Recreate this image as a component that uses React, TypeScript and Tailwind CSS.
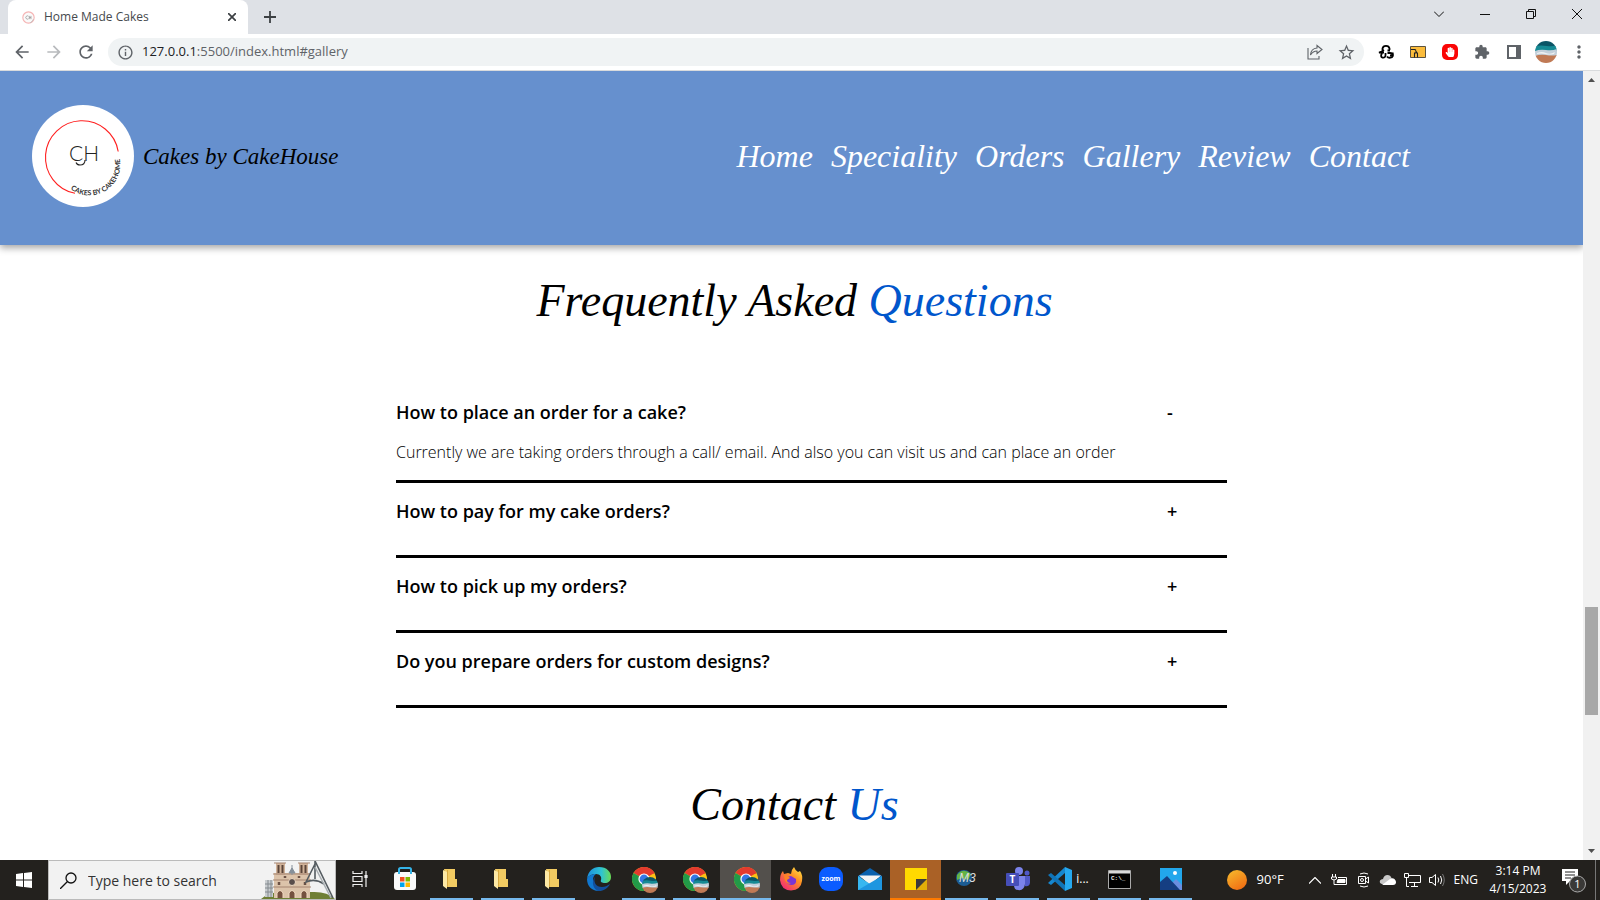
import { useState, type ReactNode } from "react";
import { FaHandPaper } from "react-icons/fa";
import { MdArrowBack, MdArrowForward, MdRefresh, MdInfoOutline, MdStarBorder, MdExtension, MdMoreVert } from "react-icons/md";

const script = "font-['Liberation_Serif',serif] italic";

function BrandMark() {
  return (
    <svg viewBox="0 0 102 102" className="size-[102px] shrink-0" role="img" aria-label="CakeHouse logo">
      <circle cx="51" cy="51" r="51" fill="#fff" />
      <path d="M86.2 46.5A36.6 36.6 0 1 0 43 88.3" fill="none" stroke="#ff2020" strokeWidth="1.1" />
      <text x="37" y="56" fontFamily="Lato, sans-serif" fontWeight="300" fontSize="21" fill="#222">CH</text>
      <path d="M53 55q0 5-5 5-3 0-4-2.500" fill="none" stroke="#222" strokeWidth="1.100" />
      <path id="ring" d="M38.500 84A31 31 0 0 0 83 42" fill="none" />
      <text fontFamily="Lato, sans-serif" fontWeight="700" fontSize="7" fill="#333">
        <textPath href="#ring">CAKES BY CAKEHOME</textPath>
      </text>
    </svg>
  );
}

function Avatar({ className }: { className: string }) {
  return (
    <svg viewBox="0 0 22 22" className={className} aria-hidden="true">
      <defs>
        <clipPath id="disc"><circle cx="11" cy="11" r="11" /></clipPath>
      </defs>
      <g clipPath="url(#disc)">
        <path fill="#0b5566" d="M0 0h22v6H0z" />
        <path fill="#168a94" d="M0 5q6-1 12 0t10-1v6H0z" />
        <path fill="#c3d0da" d="M0 10q5-2 11-1t11-1v7H0z" />
        <path fill="#eef1f3" d="M2 12q5-2 9 0t9-1l-1 2q-5 1-9 0t-8 0z" />
        <path fill="#c07a55" d="M0 15q5-2 11-1t11 0v8H0z" />
      </g>
    </svg>
  );
}

function TabStrip() {
  return (
    <div className="flex h-[34px] shrink-0 items-stretch bg-[#dee1e6]">
      <div className="ml-2 flex w-60 items-center rounded-t-lg bg-white px-3 text-[#45494d]">
        <svg viewBox="0 0 16 16" className="ml-[2px] size-[13px]" aria-hidden="true">
          <circle cx="8" cy="8" r="7" fill="#fafafa" stroke="#f5b5b5" strokeWidth="1.400" />
          <path d="M14 10a6.500 6.500 0 0 1-4 4.500" stroke="#bbb" fill="none" />
          <path d="M8 6.500a2 2 0 1 0 0 3M9 6v4M11 6v4M9 8h2" stroke="#999" fill="none" />
        </svg>
        <span className="ml-[9px] flex-1 text-[12px]">Home Made Cakes</span>
        <button aria-label="Close tab">
          <svg viewBox="0 0 8 8" className="size-2"><path d="M0 0l8 8M8 0L0 8" stroke="#3c4043" strokeWidth="1.700" /></svg>
        </button>
      </div>
      <button aria-label="New tab" className="ml-4">
        <svg viewBox="0 0 12 12" className="size-3"><path d="M6 0v12M0 6h12" stroke="#3c4043" strokeWidth="1.800" /></svg>
      </button>
      <div className="ml-auto flex h-7 items-center">
        <button aria-label="Search tabs" className="flex w-[46px] justify-center"><svg viewBox="0 0 10 6" className="h-[6px] w-[10px]"><path d="M0 .5l5 5 5-5" fill="none" stroke="#111" /></svg></button>
        <button aria-label="Minimize" className="flex w-[46px] justify-center"><svg viewBox="0 0 10 10" className="size-[10px]"><path d="M0 5.500h10" stroke="#111" /></svg></button>
        <button aria-label="Restore" className="flex w-[46px] justify-center"><svg viewBox="0 0 10 10" className="size-[10px]"><path d="M.5 2.500h7v7h-7zM2.500 2.500v-2h7v7h-2" fill="none" stroke="#111" /></svg></button>
        <button aria-label="Close" className="flex w-[46px] justify-center"><svg viewBox="0 0 10 10" className="size-[10px]"><path d="M0 0l10 10M10 0L0 10" stroke="#111" /></svg></button>
      </div>
    </div>
  );
}

function Toolbar() {
  return (
    <div className="flex h-[37px] shrink-0 items-center border-b border-[#d9dbdd] bg-white text-[#5f6368]">
      <button aria-label="Back" className="ml-3"><MdArrowBack className="size-5" /></button>
      <button aria-label="Forward" className="ml-3 text-[#b8babd]"><MdArrowForward className="size-5" /></button>
      <button aria-label="Reload" className="ml-3"><MdRefresh className="size-5" /></button>
      <div className="ml-3 flex h-7 flex-1 items-center rounded-full bg-[#f0f3f4] pr-2 pl-[9px]">
        <MdInfoOutline className="size-[17px]" />
        <div className="ml-2 flex-1 text-[13px]"><span className="text-[#202124]">127.0.0.1</span>:5500/index.html#gallery</div>
        <button aria-label="Share">
          <svg viewBox="0 0 16 16" className="mr-[14px] size-4" fill="none" stroke="#5f6368" strokeWidth="1.100">
            <path d="M1 4v11h11v-3M10 1.500l5 4-5 4V7Q6 7 3.500 11 4 4.500 10 4z" />
          </svg>
        </button>
        <button aria-label="Bookmark"><MdStarBorder className="size-[19px]" /></button>
      </div>
      <button aria-label="Recycle extension" className="ml-[14px]">
        <svg viewBox="0 0 16 16" className="size-4" fill="none" stroke="#000" strokeWidth="1.800">
          <path d="M4.500 6V4.500Q5 1.800 8 1.800t3.500 2.700V6M6 6L3.500 7.500 1 8.500h5M4 9q-2 4 .5 4.500Q7.500 14 7.500 11V9M12 6.500H9.500M9.500 9H12q2.500 0 2.500 1.500 0 1-2.500 1M14.500 8.500q1.500 5-2 5.200Q10 14 9 12.500" />
        </svg>
      </button>
      <button aria-label="Folder extension" className="ml-4">
        <svg viewBox="0 0 16 12" className="h-3 w-4"><path d="M.5.500h15v11H.5z" fill="#fbbc3c" stroke="#5c5340" /><path d="M1 3.500h4l1 1M4.500 11.500V7h1.500V5.500l1.500 2v4" fill="none" stroke="#222" strokeWidth="1.100" /></svg>
      </button>
      <button aria-label="Blocker extension" className="ml-4 flex size-4 items-center justify-center rounded-[5px] bg-[#fa0505] text-white"><FaHandPaper className="size-[10px]" /></button>
      <button aria-label="Extensions" className="ml-4"><MdExtension className="size-4" /></button>
      <button aria-label="Side panel" className="ml-4">
        <svg viewBox="0 0 14 14" className="mx-[1px] size-[14px]"><path fillRule="evenodd" d="M0 0h14v14H0zM2 2v10h7V2z" fill="#5f6368" /></svg>
      </button>
      <button aria-label="Profile" className="ml-[13px]"><Avatar className="size-[22px]" /></button>
      <button aria-label="Menu" className="mr-[11px] ml-[12px]"><MdMoreVert className="size-5" /></button>
    </div>
  );
}

const links = ["Home", "Speciality", "Orders", "Gallery", "Review", "Contact"];

function SiteHeader() {
  return (
    <header className="z-10 flex h-[174px] shrink-0 items-center bg-[#6690ce] pr-[173px] pb-[5px] pl-8 shadow-[0_3px_7px_rgba(0,0,0,0.35)]">
      <a href="#home" className="flex items-center gap-[9px] text-black">
        <BrandMark />
        <span className={`${script} pt-1 text-[23px]`}>Cakes by CakeHouse</span>
      </a>
      <nav className="ml-auto flex gap-[18px]">
        {links.map((l) => (
          <a key={l} href={`#${l.toLowerCase()}`} className={`${script} text-[32px] leading-10 text-white`}>{l}</a>
        ))}
      </nav>
    </header>
  );
}

const faqs = [
  { q: "How to place an order for a cake?", a: "Currently we are taking orders through a call/ email. And also you can visit us and can place an order" },
  { q: "How to pay for my cake orders?", a: "We accept cash and card payments" },
  { q: "How to pick up my orders?", a: "Orders can be picked up at our store" },
  { q: "Do you prepare orders for custom designs?", a: "Yes, please share your design with us" },
];

function Faq() {
  const [open, setOpen] = useState(0);
  return (
    <section className="flex flex-col items-center pt-7">
      <h2 className={`${script} pl-[6px] text-[46px] leading-[56px]`}>Frequently Asked <span className="text-[#0056cc]">Questions</span></h2>
      <div className="mt-[55px] w-[871px] max-w-full pl-10 font-['Open_Sans',sans-serif] text-black">
        {faqs.map((f, i) => (
          <div key={f.q} className="border-b-[3px] border-black py-[15px]">
            <button aria-expanded={open === i} onClick={() => setOpen(open === i ? -1 : i)} className="flex w-full items-center justify-between pr-12 text-left text-[18px] leading-[26px] font-semibold">
              <span>{f.q}</span>
              <span className="w-3">{open === i ? "-" : "+"}</span>
            </button>
            {open === i ? <p className="mt-4 mb-[2px] text-[16px] leading-[22px] font-light">{f.a}</p> : <div className="h-4" />}
          </div>
        ))}
      </div>
    </section>
  );
}

function ScrollBar() {
  return (
    <div className="flex w-[17px] shrink-0 flex-col items-center bg-[#f1f1f1]" aria-hidden="true">
      <svg viewBox="0 0 17 17" className="size-[17px] shrink-0"><path d="M5 11l3.500-4 3.500 4z" fill="#505050" /></svg>
      <div className="grow-[519]" />
      <div className="h-[108px] w-[13px] shrink-0 bg-[#a8a8a8]" />
      <div className="grow-[128]" />
      <svg viewBox="0 0 17 17" className="size-[17px] shrink-0"><path d="M5 6l3.500 4L12 6z" fill="#505050" /></svg>
    </div>
  );
}

function Notre() {
  return (
    <svg viewBox="0 0 74 38" className="h-[38px] w-[74px] shrink-0" aria-hidden="true">
      <path d="M0 38q8-7 20-7h30q16-1 24 7z" fill="#6f7f35" />
      <path d="M4 19h8v17H4z" fill="#c9cdd0" /><path d="M4 23h8M4 27h8M4 31h8M7 19v17M10 19v17" stroke="#858b90" />
      <path d="M13 12h36v25H13z" fill="#dcc3aa" />
      <path d="M15 2h9v12h-9zM38 2h9v12h-9z" fill="#d0b299" />
      <path d="M13 2h12M37 2h12M12 13h38M12 19h38M12 26h38" stroke="#a58470" />
      <path d="M17.500 4v8M21.500 4v8M40.500 4v8M44.500 4v8" stroke="#5a4439" strokeWidth="2" />
      <path d="M31 4v10M28 12l3-5 3 5z" stroke="#86909a" fill="#86909a" />
      <circle cx="31" cy="21" r="3.500" fill="#584d4b" stroke="#efd9c2" />
      <path d="M18 24v-3M44 24v-3M24 17v-2M38 17v-2" stroke="#6b5145" strokeWidth="2.500" />
      <path d="M16 37v-5q3-5 6 0v5M28 37v-5q3-5 6 0v5M40 37v-5q3-5 6 0v5" fill="#74503f" stroke="#f0d8c0" />
      <path d="M54 0l18 37M54 0v18M54 3l-9 18q9-4 18 2" fill="none" stroke="#555c61" strokeWidth="1.600" />
      <path d="M54 6l16 31" stroke="#a8aeb2" strokeWidth="1.500" />
    </svg>
  );
}

function FolderIcon() {
  return (
    <svg viewBox="0 0 14 20" className="mr-1 h-5 w-[14px]"><path d="M1 0h11v10h2v8H4z" fill="#f2cb62" /><path d="M0 1l4 2v17l-4-3z" fill="#fde9a5" /><path d="M4 1h1v17H4z" fill="#d8a940" /></svg>
  );
}

function ChromeIcon() {
  return (
    <span className="relative block size-6">
      <svg viewBox="0 0 24 24" className="size-6">
        <circle cx="12" cy="12" r="12" fill="#fbc116" />
        <path d="M12 12L1.600 6A12 12 0 0 1 22.400 6z" fill="#e33b2e" />
        <path d="M12 12L1.600 6A12 12 0 0 0 12 24l5-9z" fill="#229a48" />
        <path d="M12 0a12 12 0 0 1 10.400 6.500H12z" fill="#e33b2e" />
        <circle cx="12" cy="12" r="5.600" fill="#fff" /><circle cx="12" cy="12" r="4.400" fill="#3577e5" />
      </svg>
      <Avatar className="absolute top-[10px] left-[10px] size-4" />
    </span>
  );
}

const edge = (
  <svg viewBox="0 0 24 24" className="size-6">
    <defs>
      <linearGradient id="eg" x1="0" x2="1"><stop stopColor="#1b8fe0" /><stop offset=".6" stopColor="#2fc3d2" /><stop offset="1" stopColor="#69dc55" /></linearGradient>
    </defs>
    <path d="M0 12C1 4 6 0 12 0c8 0 12 5 12 10 0 4-3 6-6 6s-5-1-4-3c1-3-1-6-5-6-4 0-8 2-9 5z" fill="url(#eg)" />
    <path d="M0 12c1-3 5-5 9-5-3 2-4 6-2 10 2 5 6 7 9 6-8 3-16-2-16-11z" fill="#1177cf" />
    <path d="M8 10c-2 5 1 10 7 10 3 0 5-1 8-3-2 4-6 7-11 7C6 23 4 14 8 10z" fill="#124f9d" />
  </svg>
);

const firefox = (
  <svg viewBox="0 0 24 24" className="size-6">
    <defs><linearGradient id="ff" x1="1" x2=".2" y2="1"><stop stopColor="#fff04a" /><stop offset=".45" stopColor="#ff9022" /><stop offset="1" stopColor="#f2267a" /></linearGradient></defs>
    <path d="M1 13Q1 7 4 4l1 3 4-1 3 1q0-4 3-7 1 3 4 5l2-1q3 4 2 10-1 9-11 9.500Q2 23 1 13z" fill="url(#ff)" />
    <path d="M7 10l5-1 5 3q1 6-5 6-6-1-5-8z" fill="#7a35d5" /><path d="M5 8q4 0 6 3l-3 2q0 3 4 3-6 3-7-8z" fill="#ff8424" />
  </svg>
);

const winStore = (
  <svg viewBox="0 0 24 24" className="size-6"><rect x="1" y="5" width="22" height="18" rx="3" fill="#fafafa" /><path d="M6 7V2.500q0-1.500 1.500-1.500h9Q18 1 18 2.500V7" fill="none" stroke="#35b4e8" strokeWidth="2" /><path d="M7 10h4.500v4.500H7z" fill="#f25022" /><path d="M12.500 10H17v4.500h-4.500z" fill="#7fba00" /><path d="M7 15.500h4.500V20H7z" fill="#00a4ef" /><path d="M12.500 15.500H17V20h-4.500z" fill="#ffb900" /></svg>
);

const taskView = (
  <svg viewBox="0 0 16 16" className="size-4" fill="none" stroke="#eee" strokeWidth="1.200"><path d="M1 0v2.500h9V0M1 5.500h9v5H1zM1 16v-2.500h9V16M14 0v16" /><path d="M13 4.500h2v2h-2z" fill="#eee" /></svg>
);

const mail = (
  <svg viewBox="0 0 24 22" className="h-[22px] w-6"><path d="M0 8l12-8 12 8v2H0z" fill="#0b61ad" /><path d="M1 7.500h22L12 17z" fill="#f5f5f5" /><path d="M0 8l12 8v6H0z" fill="#37b7f0" /><path d="M24 8v14H0z" fill="#1e96e0" /></svg>
);

const sticky = (
  <svg viewBox="0 0 22 22" className="size-[22px]"><path d="M0 0h22v22H0z" fill="#ffd900" /><path d="M11 11h11v11H11z" fill="#e2ad08" /><path d="M11 11h11L11 22z" fill="#3b3b3b" /></svg>
);

const m3 = (
  <svg viewBox="0 0 24 20" className="h-5 w-6"><circle cx="9" cy="9" r="8" fill="#1c5c94" /><path d="M2 6q6-8 14-1l-3 6-6-2-5 2z" fill="#63b344" /><text x="4" y="13" fontFamily="Liberation Sans, sans-serif" fontStyle="italic" fontSize="12" fill="#ddd">M3</text></svg>
);

const teams = (
  <svg viewBox="0 0 24 24" className="size-6"><circle cx="13" cy="4" r="4" fill="#7b83eb" /><circle cx="21" cy="6" r="2.500" fill="#5059c9" /><path d="M17 9h7v7q-1 4-5 3z" fill="#5059c9" /><path d="M8 9h11v8q-1 7-7 6-4 0-4-5z" fill="#7b83eb" /><rect y="6" width="13" height="13" rx="1" fill="#464eb8" /><text x="6.500" y="16" textAnchor="middle" fontFamily="Open Sans, sans-serif" fontWeight="700" fontSize="10" fill="#fff">T</text></svg>
);

const code = (
  <svg viewBox="0 0 24 24" className="size-6"><path d="M17 0l7 3v18l-7 3z" fill="#25a8ef" /><path d="M17 0v6L3 18l-3-2z" fill="#1687cf" /><path d="M0 8l3-2 14 12v6z" fill="#1074b8" /></svg>
);

const cmd = (
  <svg viewBox="0 0 23 19" className="h-[19px] w-[23px]"><path d="M.5.500h22v18H.5z" fill="#000" stroke="#aaa" /><path d="M1 1h21v2.500H1z" fill="#d8d8d8" /><text x="3" y="10" fontFamily="Liberation Mono, monospace" fontSize="6" fontWeight="700" fill="#eee">C:\_</text></svg>
);

const photos = (
  <svg viewBox="0 0 22 22" className="size-[22px]"><path d="M0 0h22v22H0z" fill="#22a7ec" /><path d="M12 15l4-4 6 6v5h-8z" fill="#6a8ee0" /><path d="M0 14l7-6 13 14H0z" fill="#153e82" /><circle cx="15" cy="5" r="2" fill="#fff" /></svg>
);

function Task({ label, width, children, running, state }: { label: string; width: string; children: ReactNode; running?: boolean; state?: string }) {
  return (
    <button aria-label={label} className={`flex h-10 shrink-0 flex-col items-center ${width} ${state ?? ""}`}>
      <span className="flex flex-1 items-center justify-center">{children}</span>
      <span className={`h-[2px] ${state ? "w-full" : "w-[43px]"} ${state === "bg-[#aa6126]" ? "bg-[#ff7a00]" : running ? "bg-[#76b9ed]" : ""}`} />
    </button>
  );
}

function TaskBar() {
  return (
    <footer className="flex h-10 shrink-0 items-center bg-[#23211e] text-white">
      <button aria-label="Start" className="flex w-12 justify-center">
        <svg viewBox="0 0 16 16" className="size-4"><path d="M0 2l7-1v6.500H0zM8 1l8-1v7.500H8zM0 8.500h7V15l-7-1zM8 8.500h8V16l-8-1z" fill="#fff" /></svg>
      </button>
      <label className="flex h-10 w-72 shrink-0 items-center border border-[#bbb] bg-[#f2f2f2] pl-[11px] text-[#333]">
        <svg viewBox="0 0 17 17" className="size-[17px] shrink-0" fill="none" stroke="#111" strokeWidth="1.300"><circle cx="11" cy="6" r="5" /><path d="M7.500 9.500L0 17" /></svg>
        <input aria-label="Search" placeholder="Type here to search" className="ml-[11px] w-0 flex-1 bg-transparent text-[14px] outline-none placeholder:text-[#333]" />
        <Notre />
      </label>
      <Task label="Task view" width="w-12">{taskView}</Task>
      <Task label="Store" width="w-[42px]">{winStore}</Task>
      <Task label="Folder" width="w-[51px]" running><FolderIcon /></Task>
      <Task label="Folder" width="w-[51px]" running><FolderIcon /></Task>
      <Task label="Folder" width="w-[51px]" running><FolderIcon /></Task>
      <Task label="Edge" width="w-[39px]">{edge}</Task>
      <Task label="Chrome" width="w-[51px]" running><ChromeIcon /></Task>
      <Task label="Chrome" width="w-[51px]" running><ChromeIcon /></Task>
      <Task label="Chrome" width="w-[51px]" running state="bg-[#53504c]"><ChromeIcon /></Task>
      <Task label="Firefox" width="w-10">{firefox}</Task>
      <Task label="Zoom" width="w-[39px]">
        <svg viewBox="0 0 24 24" className="size-6"><rect width="24" height="24" rx="9" fill="#0b5cff" /><text x="12" y="14" textAnchor="middle" fontFamily="Open Sans, sans-serif" fontWeight="700" fontSize="7" fill="#fff">zoom</text></svg>
      </Task>
      <Task label="Mail" width="w-10">{mail}</Task>
      <Task label="Notes" width="w-[51px]" state="bg-[#aa6126]">{sticky}</Task>
      <Task label="M3" width="w-[51px]" running>{m3}</Task>
      <Task label="Teams" width="w-[51px]" running>{teams}</Task>
      <Task label="Code" width="w-[51px]" running><span className="flex items-center gap-1 text-[12px]">{code}i...</span></Task>
      <Task label="Command prompt" width="w-[51px]" running>{cmd}</Task>
      <Task label="Photos" width="w-[51px]" running>{photos}</Task>
      <div className="ml-auto flex h-10 items-center">
        <svg viewBox="0 0 20 20" className="size-5"><defs><linearGradient id="sun" x1=".2" x2=".8" y2="1"><stop stopColor="#f5b62b" /><stop offset="1" stopColor="#f06a12" /></linearGradient></defs><circle cx="10" cy="10" r="10" fill="url(#sun)" /></svg>
        <span className="ml-[10px] w-[52px] text-[13px]">90°F</span>
        <svg viewBox="0 0 12 7" className="h-[7px] w-3" fill="none" stroke="#fff" strokeWidth="1.200"><path d="M0 6.500l6-6 6 6" /></svg>
        <svg viewBox="0 0 16 12" className="ml-[10px] h-3 w-4" fill="none" stroke="#fff"><path d="M1.500 0v3M4.500 0v3M.5 3h5v2q-2.500 2-5 0zM3 6v4.500h12.500v-7H7" /><path d="M7 5.500h7v3H6z" fill="#fff" /></svg>
        <svg viewBox="0 0 14 16" className="ml-[10px] h-4 w-[14px]" fill="none" stroke="#fff"><path d="M3 2q4-2 8 0M3 14q4 2 8 0M1.500 4.500h7v7h-7zM8.500 7l3-2v6l-3-2" /><circle cx="5" cy="8" r="1.500" /></svg>
        <svg viewBox="0 0 17 10" className="ml-2 h-[10px] w-[17px]"><path d="M3 9Q0 8 1 5.500 2 4 4 4q1-4 4.500-4 3 0 4 3 4 0 4 4 0 2-2 2z" fill="#c8c8c8" /><path d="M3 10l8-6q5-1 6 3 0 3-3 3z" fill="#fff" /></svg>
        <svg viewBox="0 0 17 14" className="ml-2 h-[14px] w-[17px]" fill="none" stroke="#fff"><path d="M5 2.500h11.500v7H5M10.500 10v3M7 13.500h7M.5.500h4v4h-4zM2.500 5v8.500H5" /></svg>
        <svg viewBox="0 0 16 14" className="ml-2 h-[14px] w-4" fill="none" stroke="#fff"><path d="M.5 4.500H3l3.500-3v11L3 9.500H.5zM9 4.500q1.500 2.500 0 5M11.500 3q2.500 4 0 8" /><path d="M13.500 1q3.500 6 0 12" stroke="#777" /></svg>
        <span className="ml-[9px] text-[12px]">ENG</span>
        <div className="ml-2 w-16 text-center text-[12px] leading-[18px] whitespace-nowrap"><div>3:14 PM</div><div>4/15/2023</div></div>
        <button aria-label="Notifications" className="ml-3 mr-1">
          <svg viewBox="0 0 26 26" className="size-[26px]"><path d="M0 2h16v12H8l-4 4v-4H0z" fill="#fff" /><path d="M3 5h10M3 8h10M3 11h6" stroke="#222" /><circle cx="15.500" cy="17" r="8" fill="#3a3937" stroke="#aaa" /><text x="15.500" y="21" textAnchor="middle" fontFamily="Open Sans, sans-serif" fontSize="11" fill="#fff">1</text></svg>
        </button>
        <div className="mr-1 ml-[3px] h-10 w-px bg-[#777]" />
      </div>
    </footer>
  );
}

export default function App() {
  return (
    <div className="flex h-screen flex-col overflow-hidden bg-white font-['Open_Sans',sans-serif]">
      <TabStrip />
      <Toolbar />
      <div className="flex min-h-0 flex-1">
        <div className="flex min-w-0 flex-1 flex-col overflow-hidden bg-white">
          <SiteHeader />
          <main>
            <Faq />
            <section className="flex justify-center pt-[69px]">
              <h2 className={`${script} pl-[6px] text-[46px] leading-[56px]`}>Contact <span className="text-[#0056cc]">Us</span></h2>
            </section>
          </main>
        </div>
        <ScrollBar />
      </div>
      <TaskBar />
    </div>
  );
}
